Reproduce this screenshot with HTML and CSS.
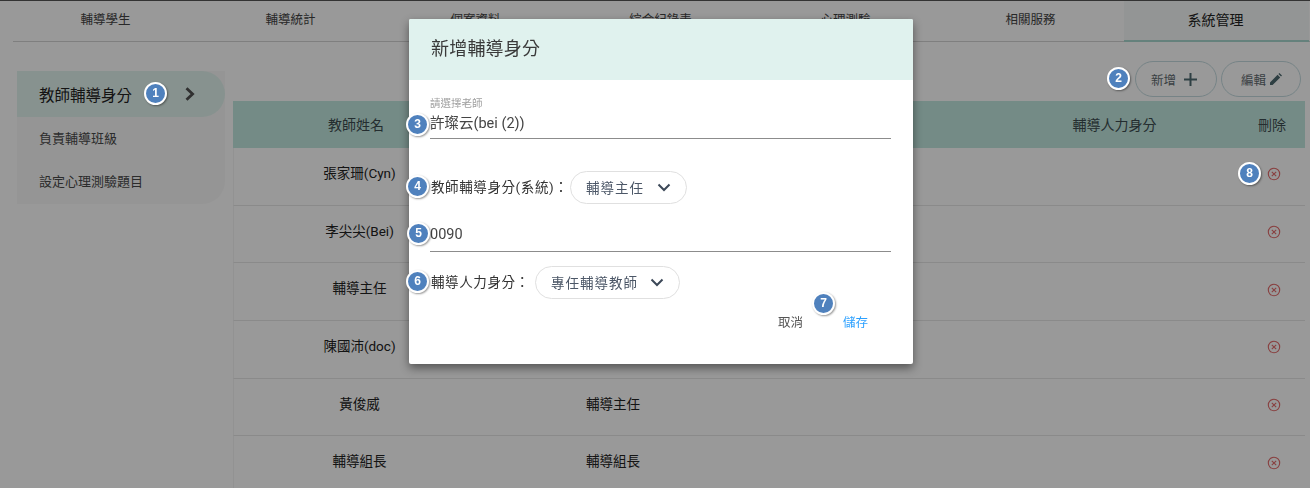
FILE: index.html
```html
<!DOCTYPE html>
<html lang="zh-Hant">
<head>
<meta charset="utf-8">
<title>新增輔導身分</title>
<link rel="stylesheet" href="styles.css">
</head>
<body>
<div class="topline"></div>
<nav class="tabs">
  <a class="tab">輔導學生</a>
  <a class="tab">輔導統計</a>
  <a class="tab">個案資料</a>
  <a class="tab">綜合紀錄表</a>
  <a class="tab">心理測驗</a>
  <a class="tab">相關服務</a>
  <a class="tab tab-active">系統管理</a>
</nav>
<div class="main">
  <aside class="side">
    <div class="side-item side-active">教師輔導身分
      <svg class="chev-right" width="12" height="14" viewBox="0 0 12 14"><path d="M2.5 1.2 8.6 7l-6.1 5.8" fill="none" stroke="#505050" stroke-width="2.8"/></svg>
    </div>
    <div class="side-item">負責輔導班級</div>
    <div class="side-item">設定心理測驗題目</div>
  </aside>
  <section class="content">
    <div class="toolbar">
      <button class="tool tool-add">新增
        <svg width="13" height="13" viewBox="0 0 13 13"><path d="M6.5 0v13M0 6.5h13" stroke="#4d6a70" stroke-width="2"/></svg>
      </button>
      <button class="tool tool-edit">編輯
        <svg width="12" height="12" viewBox="0 0 12 12"><path d="M0 12V9.4L7.6 1.8l2.6 2.6L2.6 12zM8.4 1 9.4 0l2.6 2.6-1 1z" fill="#4d6a70"/></svg>
      </button>
    </div>
    <div class="table">
      <div class="row head"><div>教師姓名</div><div class="c2"></div><div>輔導人力身分</div><div>刪除</div></div>
      <div class="row"><div>張家珊(Cyn)</div><div class="c2"></div><div></div><div><svg class="del" viewBox="0 0 14 14"><circle cx="7" cy="7" r="5.7"/><path d="M4.8 4.8l4.4 4.4M9.2 4.8l-4.4 4.4"/></svg></div></div>
      <div class="row"><div>李尖尖(Bei)</div><div class="c2"></div><div></div><div><svg class="del" viewBox="0 0 14 14"><circle cx="7" cy="7" r="5.7"/><path d="M4.8 4.8l4.4 4.4M9.2 4.8l-4.4 4.4"/></svg></div></div>
      <div class="row"><div>輔導主任</div><div class="c2"></div><div></div><div><svg class="del" viewBox="0 0 14 14"><circle cx="7" cy="7" r="5.7"/><path d="M4.8 4.8l4.4 4.4M9.2 4.8l-4.4 4.4"/></svg></div></div>
      <div class="row"><div>陳國沛(doc)</div><div class="c2"></div><div></div><div><svg class="del" viewBox="0 0 14 14"><circle cx="7" cy="7" r="5.7"/><path d="M4.8 4.8l4.4 4.4M9.2 4.8l-4.4 4.4"/></svg></div></div>
      <div class="row"><div>黃俊威</div><div class="c2">輔導主任</div><div></div><div><svg class="del" viewBox="0 0 14 14"><circle cx="7" cy="7" r="5.7"/><path d="M4.8 4.8l4.4 4.4M9.2 4.8l-4.4 4.4"/></svg></div></div>
      <div class="row"><div>輔導組長</div><div class="c2">輔導組長</div><div></div><div><svg class="del" viewBox="0 0 14 14"><circle cx="7" cy="7" r="5.7"/><path d="M4.8 4.8l4.4 4.4M9.2 4.8l-4.4 4.4"/></svg></div></div>
    </div>
  </section>
</div>

<div class="overlay"></div>

<div class="modal">
  <header class="modal-head">新增輔導身分</header>
  <div class="modal-body">
    <div class="field field-teacher">
      <div class="float-label">請選擇老師</div>
      <div class="field-value">許璨云(bei (2))</div>
    </div>
    <div class="select-row select-row-1">
      <span class="select-label">教師輔導身分(系統)：</span>
      <span class="select">輔導主任
        <svg width="14" height="9" viewBox="0 0 14 9"><path d="M1.5 1.5 7 7l5.5-5.5" fill="none" stroke="#3c4858" stroke-width="2"/></svg>
      </span>
    </div>
    <div class="field field-code">
      <div class="field-value">0090</div>
    </div>
    <div class="select-row select-row-2">
      <span class="select-label">輔導人力身分：</span>
      <span class="select">專任輔導教師
        <svg width="14" height="9" viewBox="0 0 14 9"><path d="M1.5 1.5 7 7l5.5-5.5" fill="none" stroke="#3c4858" stroke-width="2"/></svg>
      </span>
    </div>
    <div class="actions">
      <span class="act">取消</span>
      <span class="act act-save">儲存</span>
    </div>
  </div>
</div>

<span class="badge b1">1</span>
<span class="badge b2">2</span>
<span class="badge b3">3</span>
<span class="badge b4">4</span>
<span class="badge b5">5</span>
<span class="badge b6">6</span>
<span class="badge b7">7</span>
<span class="badge b8">8</span>
</body>
</html>
```
FILE: styles.css
```css
* { box-sizing: border-box; }
html, body { height: 100%; }
body {
  margin: 0;
  overflow: hidden;
  background: #fff;
  color: #222;
  font-family: Roboto, "Noto Sans CJK TC", sans-serif;
  font-size: 14px;
}
.topline { height: 1px; background: #555; }
.tabs {
  display: flex;
  margin-left: 13px;
  height: 41px;
  border-bottom: 1px solid #d4d4d4;
}
.tab {
  width: 185px;
  height: 41px;
  padding-top: 9px;
  line-height: 20px;
  text-align: center;
  font-size: 12.5px;
  color: #444;
}
.tab-active {
  margin-left: 1px;
  padding-right: 2px;
  font-size: 14px;
  color: #222;
  background: #f5f9f8;
  border-bottom: 2px solid #a9d8cf;
}
.main { display: flex; padding-left: 17px; }
.side {
  width: 208px;
  height: 133px;
  margin-top: 29px;
  background: #f9f9f9;
  border-radius: 0 0 23px 0;
}
.side-item {
  display: flex;
  align-items: center;
  height: 43px;
  padding: 0 0 2px 22px;
  font-size: 13px;
  color: #4a4a4a;
}
.side-active {
  position: relative;
  height: 46px;
  padding: 0 0 0 22px;
  font-size: 15.5px;
  color: #222;
  background: #e2f4ef;
  border-radius: 0 23px 23px 0;
}
.chev-right { position: absolute; left: 167px; top: 16px; }
.content { width: 1072px; margin-left: 8px; }
.toolbar {
  display: flex;
  justify-content: flex-end;
  gap: 4px;
  height: 59px;
  padding: 19px 4px 0 0;
}
.tool {
  display: flex;
  align-items: center;
  height: 36px;
  background: transparent;
  border: 1px solid #c5dbe0;
  border-radius: 18px;
  font: inherit;
  font-size: 12.5px;
  color: #5f6b70;
}
.tool-add { width: 82px; gap: 8px; padding: 0 0 0 15px; }
.tool-edit { width: 80px; gap: 4px; padding: 0 0 0 19px; }
.row {
  display: grid;
  grid-template-columns: 254px 503px 249px 66px;
  height: 57.7px;
  padding-bottom: 9px;
  align-items: center;
  text-align: center;
  border-bottom: 1px solid #e6e6e6;
  border-left: 1px solid #f4f4f4;
  font-size: 13.5px;
}
.row > :first-child { padding-right: 3px; }
.row .c2 { text-align: left; padding-left: 98px; }
.head {
  height: 47px;
  padding-bottom: 2px;
  background: #c2e8df;
  border: 0;
  color: #3d4c50;
  font-size: 14px;
}
.row.head > :first-child { padding-right: 8px; }
.del {
  width: 14px;
  height: 14px;
  margin: 8px 0 0 2px;
  fill: none;
  stroke: #e46c6c;
  stroke-width: 1.1;
}
.overlay {
  position: fixed;
  inset: 0;
  background: rgba(0, 0, 0, .4);
}
.modal {
  position: absolute;
  left: 409px;
  top: 19px;
  width: 504px;
  height: 345px;
  background: #fff;
  border-radius: 2px;
  box-shadow: 0 4px 10px rgba(0, 0, 0, .45);
}
.modal-head {
  height: 61px;
  padding: 18px 0 0 22px;
  line-height: 24px;
  font-size: 18px;
  letter-spacing: .2px;
  color: #3a3a3a;
  background: #e0f2ee;
  border-radius: 2px 2px 0 0;
}
.modal-body { padding: 0 22px 0 21px; }
.field { border-bottom: 1px solid #8c8c8c; }
.field-teacher { height: 59px; padding-top: 17px; }
.float-label {
  height: 14px;
  line-height: 14px;
  font-size: 10.5px;
  color: #a0a0a0;
}
.field-value {
  line-height: 20px;
  font-size: 14.5px;
  color: #444;
}
.field-teacher .field-value { margin-top: 3px; }
.field-code { height: 36px; margin-top: 12px; padding-top: 9px; }
.select-row { display: flex; align-items: center; color: #333; }
.select-row-1 { height: 34px; margin-top: 31px; }
.select-row-2 { height: 34px; margin-top: 13px; }
.select-label {
  margin: -3px 0 0 1px;
  font-size: 13.5px;
  letter-spacing: .6px;
  white-space: nowrap;
}
.select-row-1 .select-label { width: 139px; }
.select-row-2 .select-label { width: 104px; }
.select-row-1 .select { width: 117px; }
.select-row-2 .select { width: 145px; }
.select {
  display: flex;
  align-items: center;
  justify-content: space-between;
  height: 33px;
  padding: 0 15px;
  background: #fff;
  border: 1px solid #e0e0e0;
  border-radius: 17px;
  font-size: 13.5px;
  letter-spacing: 1px;
  color: #4c5767;
}
.actions {
  display: flex;
  justify-content: flex-end;
  gap: 40px;
  margin-top: 14px;
  padding-right: 23px;
}
.act { line-height: 20px; font-size: 12.5px; color: #555; }
.act-save { color: #2ba0ff; }
.badge {
  position: absolute;
  width: 23px;
  height: 23px;
  line-height: 19px;
  text-align: center;
  border: 2px solid #fff;
  border-radius: 50%;
  background: #4f81bd;
  color: #fff;
  font-family: "Liberation Sans", sans-serif;
  font-size: 12px;
  font-weight: 700;
  box-shadow: 1px 1px 2px rgba(0, 0, 0, .4);
}
.b1 { left: 144px; top: 82px; }
.b2 { left: 1107px; top: 67px; }
.b3 { left: 406px; top: 113px; }
.b4 { left: 406px; top: 175px; }
.b5 { left: 407px; top: 222px; }
.b6 { left: 406px; top: 270px; }
.b7 { left: 812px; top: 292px; }
.b8 { left: 1238px; top: 162px; }
```
